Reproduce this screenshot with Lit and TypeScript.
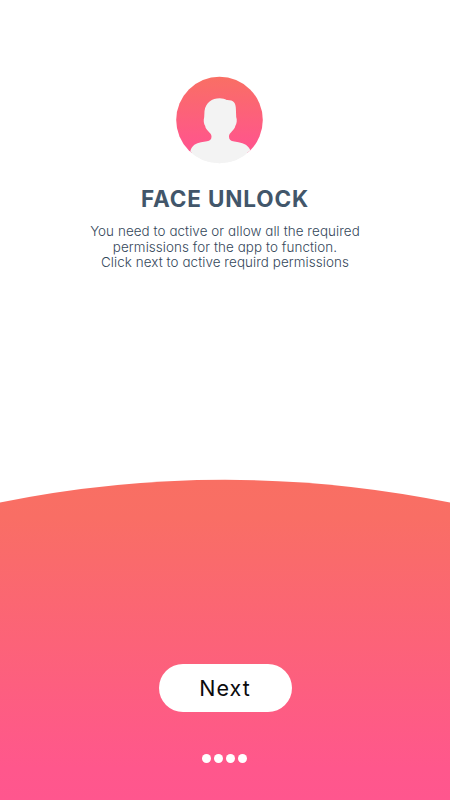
import { LitElement, html, css } from "lit";
import { customElement } from "lit/decorators.js";

@customElement("app-root")
export class AppRoot extends LitElement {
  static styles = css`
    :host {
      display: flex;
      flex-direction: column;
      height: 800px;
      width: 450px;
      overflow: hidden;
      background: #fff;
      font-family: "Inter", "Open Sans", sans-serif;
      font-feature-settings: "cv11" 1;
      color: #42566a;
    }
    .intro {
      flex: 0 0 479px;
      display: flex;
      flex-direction: column;
      align-items: center;
      box-sizing: border-box;
      padding-top: 76px;
    }
    .avatar {
      display: block;
      width: 88px;
      height: 88px;
      margin-right: 12px;
    }
    h1 {
      margin: 21px 0 0;
      font-size: 22.5px;
      line-height: 28px;
      font-weight: 700;
      letter-spacing: 0.85px;
      white-space: nowrap;
    }
    .copy {
      margin: 11px 0 0;
      font-size: 13.4px;
      line-height: 15.5px;
      text-align: center;
      white-space: nowrap;
      font-weight: 350;
      letter-spacing: 0.08px;
      color: #35485b;
    }
    .line {
      display: block;
    }
    .panel {
      flex: 1;
      position: relative;
      display: flex;
      flex-direction: column;
      align-items: center;
    }
    .hill {
      position: absolute;
      inset: 0;
      width: 450px;
      height: 321px;
    }
    button {
      position: relative;
      margin: 185px 0 0;
      width: 133px;
      height: 48px;
      border: 0;
      padding: 0;
      border-radius: 24px;
      background: #fff;
      color: #0b0b0d;
      font: 400 21.5px/48px "Inter", sans-serif;
      letter-spacing: 1px;
    }
    .dots {
      position: relative;
      display: flex;
      gap: 3px;
      margin: 42px 1px 0 0;
    }
    .dot {
      width: 9px;
      height: 9px;
      border-radius: 50%;
      background: #fff;
    }
  `;

  render() {
    return html`
      <section class="intro">
        <svg class="avatar" viewBox="0 0 88 88" aria-hidden="true">
          <defs>
            <linearGradient id="disc" x1="0" y1="0" x2="0" y2="1">
              <stop offset="0" stop-color="#f96f64" />
              <stop offset="0.78" stop-color="#ff568b" />
              <stop offset="0.88" stop-color="#ff568b" />
              <stop offset="0.881" stop-color="#f3f3f3" />
            </linearGradient>
            <clipPath id="round"><circle cx="44.500" cy="44" r="43.300" /></clipPath>
          </defs>
          <circle cx="44.500" cy="44" r="43.300" fill="url(#disc)" />
          <path clip-path="url(#round)" fill="#f3f3f3"
            d="M13 88 L15.500 74.500 C17 69.500 21 67 26 66.200 L32 65.300 C35 64.700 36.500 63.500 36.500 60.500 C36.500 58 35 57.500 33.500 55.500 C32 53.500 30.500 52.500 30.200 50 C28.700 48 28.300 44 29.200 41 L29.500 35 C30.700 26.500 37 22.300 44.700 22.300 C47.700 22.300 49.700 23 51.700 24 C58.500 23.800 60.900 27 60.900 33 L61.200 41 C62.300 44 61.800 47.500 60.300 50 C59.800 52.500 58.300 53.500 56.800 55.500 C55.300 57.500 54 58 54 60.500 C54 63.500 55.500 64.700 58 65.300 L63.500 66.200 C69 67 73.500 69.500 75.500 74.500 L78 88 Z" />
        </svg>
        <h1>FACE UNLOCK</h1>
        <p class="copy">
          <span class="line">You need to active or allow all the required</span>
          <span class="line">permissions for the app to function.</span>
          <span class="line">Click next to active requird permissions</span>
        </p>
      </section>
      <section class="panel">
        <svg class="hill" viewBox="0 0 450 321" aria-hidden="true">
          <defs>
            <linearGradient id="glow" x1="0" y1="0" x2="0" y2="1">
              <stop offset="0" stop-color="#f96f63" />
              <stop offset="0.12" stop-color="#f96e65" />
              <stop offset="0.9" stop-color="#ff578c" />
              <stop offset="1" stop-color="#ff568e" />
            </linearGradient>
          </defs>
          <path fill="url(#glow)" d="M0 23.500 A1136 1136 0 0 1 450 23.500 V321 H0 Z" />
        </svg>
        <button>Next</button>
        <div class="dots">
          <span class="dot"></span><span class="dot"></span><span class="dot"></span><span class="dot"></span>
        </div>
      </section>
    `;
  }
}
